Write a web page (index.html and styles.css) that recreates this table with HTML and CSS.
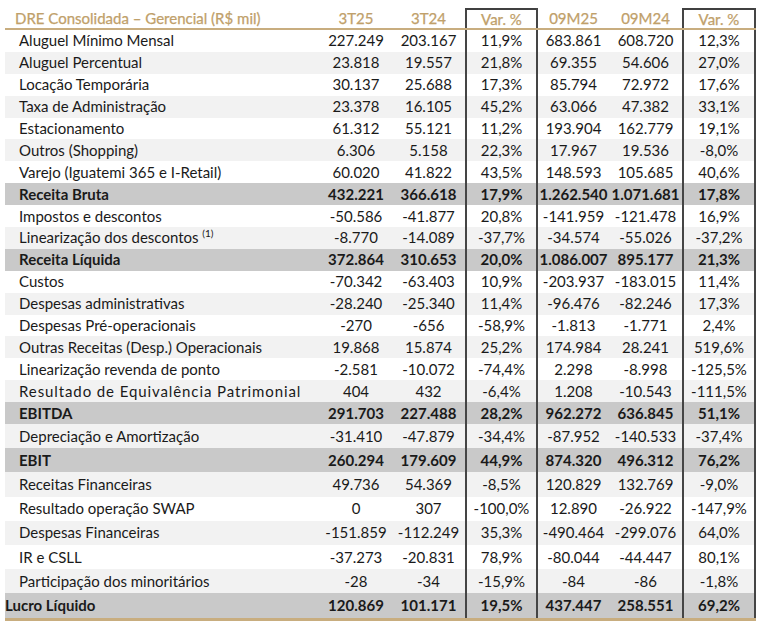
FILE: index.html
```html
<!DOCTYPE html>
<html lang="pt-BR">
<head>
<meta charset="utf-8">
<title>DRE Consolidada – Gerencial</title>
<link rel="stylesheet" href="styles.css">
</head>
<body>
<table class="dre">
  <colgroup>
    <col class="c-label"><col class="c-a"><col class="c-b"><col class="c-v1"><col class="c-c"><col class="c-d"><col class="c-v2">
  </colgroup>
  <thead>
    <tr class="head">
      <th class="lbl">DRE Consolidada – Gerencial (R$ mil)</th>
      <th>3T25</th><th>3T24</th><th class="v">Var. %</th><th>09M25</th><th>09M24</th><th class="v">Var. %</th>
    </tr>
  </thead>
  <tbody>
    <tr class="r s"><td class="lbl">Aluguel Mínimo Mensal</td><td>227.249</td><td>203.167</td><td class="v">11,9%</td><td>683.861</td><td>608.720</td><td class="v">12,3%</td></tr>
    <tr class="r s alt"><td class="lbl">Aluguel Percentual</td><td>23.818</td><td>19.557</td><td class="v">21,8%</td><td>69.355</td><td>54.606</td><td class="v">27,0%</td></tr>
    <tr class="r s"><td class="lbl">Locação Temporária</td><td>30.137</td><td>25.688</td><td class="v">17,3%</td><td>85.794</td><td>72.972</td><td class="v">17,6%</td></tr>
    <tr class="r s alt"><td class="lbl">Taxa de Administração</td><td>23.378</td><td>16.105</td><td class="v">45,2%</td><td>63.066</td><td>47.382</td><td class="v">33,1%</td></tr>
    <tr class="r s"><td class="lbl">Estacionamento</td><td>61.312</td><td>55.121</td><td class="v">11,2%</td><td>193.904</td><td>162.779</td><td class="v">19,1%</td></tr>
    <tr class="r s alt"><td class="lbl">Outros (Shopping)</td><td>6.306</td><td>5.158</td><td class="v">22,3%</td><td>17.967</td><td>19.536</td><td class="v">-8,0%</td></tr>
    <tr class="r s"><td class="lbl">Varejo (Iguatemi 365 e I-Retail)</td><td>60.020</td><td>41.822</td><td class="v">43,5%</td><td>148.593</td><td>105.685</td><td class="v">40,6%</td></tr>
    <tr class="r s total"><td class="lbl">Receita Bruta</td><td>432.221</td><td>366.618</td><td class="v">17,9%</td><td>1.262.540</td><td>1.071.681</td><td class="v">17,8%</td></tr>
    <tr class="r s"><td class="lbl">Impostos e descontos</td><td>-50.586</td><td>-41.877</td><td class="v">20,8%</td><td>-141.959</td><td>-121.478</td><td class="v">16,9%</td></tr>
    <tr class="r s alt"><td class="lbl">Linearização dos descontos <sup class="note">(1)</sup></td><td>-8.770</td><td>-14.089</td><td class="v">-37,7%</td><td>-34.574</td><td>-55.026</td><td class="v">-37,2%</td></tr>
    <tr class="r s total"><td class="lbl">Receita Líquida</td><td>372.864</td><td>310.653</td><td class="v">20,0%</td><td>1.086.007</td><td>895.177</td><td class="v">21,3%</td></tr>
    <tr class="r s"><td class="lbl">Custos</td><td>-70.342</td><td>-63.403</td><td class="v">10,9%</td><td>-203.937</td><td>-183.015</td><td class="v">11,4%</td></tr>
    <tr class="r s alt"><td class="lbl">Despesas administrativas</td><td>-28.240</td><td>-25.340</td><td class="v">11,4%</td><td>-96.476</td><td>-82.246</td><td class="v">17,3%</td></tr>
    <tr class="r s"><td class="lbl">Despesas Pré-operacionais</td><td>-270</td><td>-656</td><td class="v">-58,9%</td><td>-1.813</td><td>-1.771</td><td class="v">2,4%</td></tr>
    <tr class="r s alt"><td class="lbl">Outras Receitas (Desp.) Operacionais</td><td>19.868</td><td>15.874</td><td class="v">25,2%</td><td>174.984</td><td>28.241</td><td class="v">519,6%</td></tr>
    <tr class="r s"><td class="lbl">Linearização revenda de ponto</td><td>-2.581</td><td>-10.072</td><td class="v">-74,4%</td><td>2.298</td><td>-8.998</td><td class="v">-125,5%</td></tr>
    <tr class="r s alt"><td class="lbl wide">Resultado de Equivalência Patrimonial</td><td>404</td><td>432</td><td class="v">-6,4%</td><td>1.208</td><td>-10.543</td><td class="v">-111,5%</td></tr>
    <tr class="r s total"><td class="lbl">EBITDA</td><td>291.703</td><td>227.488</td><td class="v">28,2%</td><td>962.272</td><td>636.845</td><td class="v">51,1%</td></tr>
    <tr class="r t alt"><td class="lbl">Depreciação e Amortização</td><td>-31.410</td><td>-47.879</td><td class="v">-34,4%</td><td>-87.952</td><td>-140.533</td><td class="v">-37,4%</td></tr>
    <tr class="r t total"><td class="lbl">EBIT</td><td>260.294</td><td>179.609</td><td class="v">44,9%</td><td>874.320</td><td>496.312</td><td class="v">76,2%</td></tr>
    <tr class="r t alt"><td class="lbl">Receitas Financeiras</td><td>49.736</td><td>54.369</td><td class="v">-8,5%</td><td>120.829</td><td>132.769</td><td class="v">-9,0%</td></tr>
    <tr class="r t"><td class="lbl">Resultado operação SWAP</td><td>0</td><td>307</td><td class="v">-100,0%</td><td>12.890</td><td>-26.922</td><td class="v">-147,9%</td></tr>
    <tr class="r t alt"><td class="lbl">Despesas Financeiras</td><td>-151.859</td><td>-112.249</td><td class="v">35,3%</td><td>-490.464</td><td>-299.076</td><td class="v">64,0%</td></tr>
    <tr class="r t"><td class="lbl">IR e CSLL</td><td>-37.273</td><td>-20.831</td><td class="v">78,9%</td><td>-80.044</td><td>-44.447</td><td class="v">80,1%</td></tr>
    <tr class="r t alt"><td class="lbl">Participação dos minoritários</td><td>-28</td><td>-34</td><td class="v">-15,9%</td><td>-84</td><td>-86</td><td class="v">-1,8%</td></tr>
    <tr class="r t total last"><td class="lbl flush">Lucro Líquido</td><td>120.869</td><td>101.171</td><td class="v">19,5%</td><td>437.447</td><td>258.551</td><td class="v">69,2%</td></tr>
  </tbody>
</table>
</body>
</html>
```

FILE: styles.css
```css
html, body {
  margin: 0;
  padding: 0;
  background: #ffffff;
}

.dre {
  margin: 8px 0 0 5px;
  width: 750px;
  table-layout: fixed;
  border-collapse: collapse;
  font-family: Lato, "Open Sans", sans-serif;
  font-size: 15px;
  color: #1a1a1a;
}

.c-label { width: 315px; }
.c-a { width: 72px; }
.c-b { width: 74px; }
.c-v1 { width: 71px; }
.c-c { width: 72px; }
.c-d { width: 74px; }
.c-v2 { width: 72px; }

.dre th,
.dre td {
  padding: 0;
  text-align: center;
  white-space: nowrap;
  line-height: 1;
}

.head th {
  height: 18px;
  color: #c0a06a;
  font-weight: 400;
  border-bottom: 2px solid #c8ad7f;
  -webkit-text-stroke: 0.25px #c0a06a;
}

.head th.lbl {
  text-align: left;
  padding-left: 10px;
}

.head th.v {
  border-top: 2px solid #404040;
}

.dre .v {
  border-left: 2px solid #454545;
  border-right: 2px solid #454545;
}

.r.s td { height: 21.9px; }
.r.t td { height: 24.2px; }

.r.alt td { background: #f2f2f2; }

.r.total td {
  background: #c9c9c9;
  font-weight: 700;
}

.r td.lbl {
  text-align: left;
  padding-left: 14px;
}

.r td.lbl.flush { padding-left: 0; }

.r td.lbl.wide { letter-spacing: 0.9px; }

.r.last td { border-bottom: 3px solid #c8ad7f; }

.note {
  font-size: 10px;
  vertical-align: 6px;
  line-height: 0;
}
```
